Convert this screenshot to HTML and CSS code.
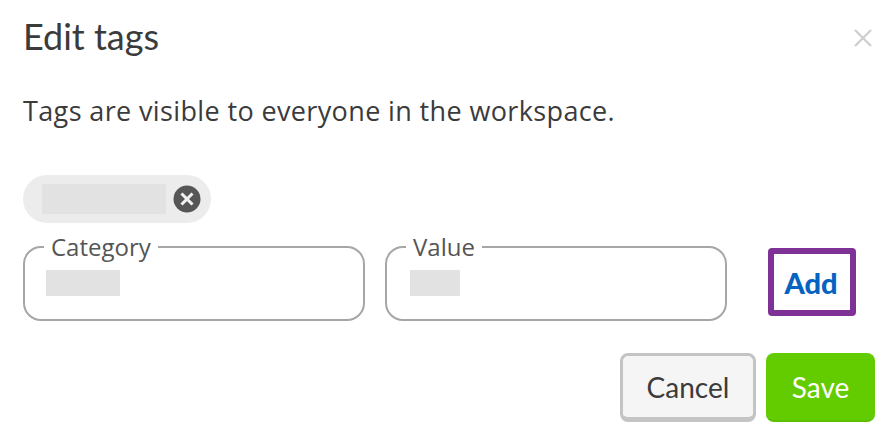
FILE: index.html
```html
<!DOCTYPE html>
<html lang="en">
<head>
  <meta charset="UTF-8">
  <meta name="viewport" content="width=device-width, initial-scale=1.0">
  <title>Edit tags</title>
  <link rel="stylesheet" href="styles.css">
</head>
<body>

<div class="dialog">
  <div class="header">
    <h2>Edit tags</h2>
    <svg class="close" width="20" height="20" viewBox="0 0 20 20">
      <path d="M2 2 L18 18 M18 2 L2 18" stroke="#cfcfcf" stroke-width="2.4" fill="none"/>
    </svg>
  </div>

  <p class="intro">Tags are visible to everyone in the workspace.</p>

  <div class="chip">
    <span class="blank chip-blank"></span>
    <svg class="chip-remove" width="28" height="28" viewBox="0 0 28 28">
      <circle cx="14" cy="14" r="13.5" fill="#565656"/>
      <path d="M8.5 8.5 L19.5 19.5 M19.5 8.5 L8.5 19.5" stroke="#f2f2f2" stroke-width="3" fill="none"/>
    </svg>
  </div>

  <div class="tag-row">
    <fieldset class="field">
      <legend>Category</legend>
      <span class="blank category-blank"></span>
    </fieldset>
    <fieldset class="field field-value">
      <legend>Value</legend>
      <span class="blank value-blank"></span>
    </fieldset>
    <button class="add-btn">Add</button>
  </div>

  <div class="actions">
    <button class="btn btn-cancel">Cancel</button>
    <button class="btn btn-save">Save</button>
  </div>
</div>

</body>
</html>
```

FILE: styles.css
```css
body {
  margin: 0;
  background-color: #fff;
  font-family: "Lato", Arial, sans-serif;
  color: #3b3b3b;
}
.dialog {
  width: 852px;
  padding: 0 21px 0 23px;
}
.header {
  display: flex;
  justify-content: space-between;
  align-items: center;
  height: 38px;
  padding-top: 17px;
}
h2 {
  margin: 0;
  font-size: 36px;
  font-weight: 400;
  line-height: 38px;
}
.close {
  margin: 4px 2px 0 0;
}
.intro {
  margin: 0;
  padding-top: 39px;
  font-family: "Open Sans", Arial, sans-serif;
  font-size: 27px;
  line-height: 34px;
  letter-spacing: 0.37px;
}
.chip {
  display: flex;
  align-items: center;
  gap: 7px;
  width: 188px;
  height: 48px;
  margin-top: 47px;
  padding-left: 19px;
  box-sizing: border-box;
  border-radius: 24px;
  background-color: #ececec;
}
.blank {
  display: block;
  background-color: #e2e2e2;
}
.chip-blank {
  width: 124px;
  height: 30px;
}
.tag-row {
  display: flex;
  gap: 20px;
  margin-top: 12px;
}
.field {
  width: 342px;
  height: 86px;
  margin: 0;
  padding: 11px 21px 0 21px;
  box-sizing: border-box;
  border: 2px solid #a6a6a6;
  border-radius: 18px;
}
legend {
  margin-left: -2px;
  padding: 0 7px;
  font-family: "Open Sans", Arial, sans-serif;
  font-size: 24px;
  line-height: 24px;
  color: #555;
}
.category-blank {
  width: 74px;
  height: 26px;
}
.value-blank {
  width: 50px;
  height: 26px;
  margin-left: 2px;
}
.add-btn {
  width: 88px;
  height: 68px;
  margin: 13px 0 0 21px;
  padding: 0 2px 0 0;
  border: 6px solid #7f3296;
  border-radius: 4px;
  background: #fff;
  color: #0563c1;
  font-family: "Lato", Arial, sans-serif;
  font-size: 29px;
  font-weight: 900;
}
.actions {
  display: flex;
  justify-content: flex-end;
  gap: 10px;
  margin-top: 32px;
}
.btn {
  height: 69px;
  padding: 0;
  border-radius: 8px;
  box-sizing: border-box;
  font-family: "Lato", Arial, sans-serif;
  font-size: 28px;
}
.btn-cancel {
  width: 136px;
  border: 3px solid #c4c4c4;
  border-bottom-width: 5px;
  background-color: #f5f5f5;
  color: #3b3b3b;
}
.btn-save {
  width: 109px;
  border: none;
  border-bottom: 2px solid #5cbf00;
  background-color: #62cc00;
  color: #fff;
}
```
